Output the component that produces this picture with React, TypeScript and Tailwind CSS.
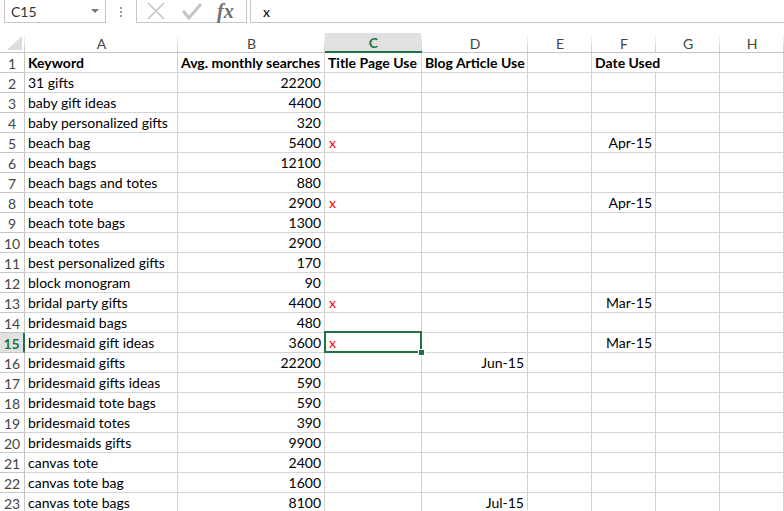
import React from "react";

type Row = { a: string; b: string; c?: string; d?: string; f?: string };

const rows: Row[] = [
  { a: "31 gifts", b: "22200" },
  { a: "baby gift ideas", b: "4400" },
  { a: "baby personalized gifts", b: "320" },
  { a: "beach bag", b: "5400", c: "x", f: "Apr-15" },
  { a: "beach bags", b: "12100" },
  { a: "beach bags and totes", b: "880" },
  { a: "beach tote", b: "2900", c: "x", f: "Apr-15" },
  { a: "beach tote bags", b: "1300" },
  { a: "beach totes", b: "2900" },
  { a: "best personalized gifts", b: "170" },
  { a: "block monogram", b: "90" },
  { a: "bridal party gifts", b: "4400", c: "x", f: "Mar-15" },
  { a: "bridesmaid bags", b: "480" },
  { a: "bridesmaid gift ideas", b: "3600", c: "x", f: "Mar-15" },
  { a: "bridesmaid gifts", b: "22200", d: "Jun-15" },
  { a: "bridesmaid gifts ideas", b: "590" },
  { a: "bridesmaid tote bags", b: "590" },
  { a: "bridesmaid totes", b: "390" },
  { a: "bridesmaids gifts", b: "9900" },
  { a: "canvas tote", b: "2400" },
  { a: "canvas tote bag", b: "1600" },
  { a: "canvas tote bags", b: "8100", d: "Jul-15" },
];

const gridCols =
  "grid grid-cols-[25px_153px_147px_97px_106px_64px_64px_64px_64px]";

const cell =
  "h-[20px] border-r border-b border-[#d4d4d4] flex items-center whitespace-nowrap text-[14px] leading-none pt-[1px]";

const hdrSep =
  "bg-[linear-gradient(to_bottom,#ffffff,#c9c9c9)] bg-no-repeat bg-[length:1px_100%] bg-right";

function ColHeader({ label, selected }: { label: string; selected?: boolean }) {
  if (selected) {
    return (
      <div
        className={`h-[20px] border-b-2 border-[#217346] bg-[#e1e1e1] flex items-center justify-center text-[14px] font-bold text-[#217346] pt-[1px] ${hdrSep}`}
      >
        {label}
      </div>
    );
  }
  return (
    <div
      className={`h-[20px] border-b border-[#c6c6c6] flex items-center justify-center text-[14px] text-[#444] pt-[1px] ${hdrSep}`}
    >
      {label}
    </div>
  );
}

export default function App() {
  return (
    <div
      className="w-[784px] h-[511px] overflow-hidden bg-white select-none text-black"
      style={{ fontFamily: "Lato, 'Open Sans', sans-serif" }}
    >
      {/* Formula bar */}
      <div className="h-[33px] flex items-start">
        <div className="mt-[-1px] ml-[4px] w-[102px] h-[24px] border border-[#c6c6c6] flex items-center justify-between pl-[6px] pr-[6px] bg-white">
          <span className="text-[14px] text-[#333] pt-[1px]">C15</span>
          <svg width="8" height="5" viewBox="0 0 8 5">
            <path d="M0 0 L8 0 L4 4 Z" fill="#777" />
          </svg>
        </div>
        <div className="w-[30px] h-[23px] flex flex-col items-center justify-center gap-[2px]">
          <div className="w-[2px] h-[2px] bg-[#9a9a9a]" />
          <div className="w-[2px] h-[2px] bg-[#9a9a9a]" />
          <div className="w-[2px] h-[2px] bg-[#9a9a9a]" />
        </div>
        <div className="mt-[-1px] w-[111px] h-[24px] border border-[#c6c6c6] flex items-center pl-[9px]">
          <svg width="20" height="20" viewBox="0 0 20 20">
            <path d="M2 2 L18 18 M18 2 L2 18" stroke="#c4c4c4" strokeWidth="1.6" fill="none" />
          </svg>
          <svg width="22" height="20" viewBox="0 0 22 20" className="ml-[15px]">
            <path d="M2 10 L8 17 L20 3" stroke="#c4c4c4" strokeWidth="3" fill="none" />
          </svg>
          <span
            className="ml-[14px] text-[20px] italic font-bold text-[#6f6f6f] leading-none"
            style={{ fontFamily: "'Liberation Serif', 'DejaVu Serif', serif" }}
          >
            fx
          </span>
        </div>
        <div className="mt-[-1px] ml-[3px] flex-1 h-[24px] border border-r-0 border-[#c6c6c6] flex items-center pl-[12px]">
          <span className="text-[14px] text-black pt-[1px]">x</span>
        </div>
      </div>

      {/* Column headers */}
      <div className={gridCols}>
        <div className={`h-[20px] border-b border-[#c6c6c6] flex items-end justify-end pr-[3px] pb-[2px] ${hdrSep}`}>
          <svg width="15" height="14" viewBox="0 0 15 14">
            <path d="M15 0 L15 14 L0 14 Z" fill="#dcdcdc" />
          </svg>
        </div>
        <ColHeader label="A" />
        <ColHeader label="B" />
        <ColHeader label="C" selected />
        <ColHeader label="D" />
        <ColHeader label="E" />
        <ColHeader label="F" />
        <ColHeader label="G" />
        <ColHeader label="H" />
      </div>

      {/* Row 1 */}
      <div className={gridCols}>
        <div className="h-[20px] border-r border-b border-[#c6c6c6] flex items-center justify-center text-[14px] text-[#444] pt-[1px]">
          1
        </div>
        <div className={`${cell} pl-[3px] font-bold`}>Keyword</div>
        <div className={`${cell} pl-[3px] font-bold`}>Avg. monthly searches</div>
        <div className={`${cell} pl-[3px] font-bold`}>Title Page Use</div>
        <div className={`${cell} pl-[3px] font-bold`}>Blog Article Use</div>
        <div className={cell} />
        <div className={`${cell} pl-[3px] font-bold border-r-0 relative z-10`}>Date Used</div>
        <div className={cell} />
        <div className={cell} />
      </div>

      {rows.map((r, i) => {
        const n = i + 2;
        const sel = n === 15;
        return (
          <div key={n} className={gridCols}>
            {sel ? (
              <div className="h-[20px] border-r-2 border-r-[#217346] border-b border-b-[#c6c6c6] bg-[#e1e1e1] flex items-center justify-center text-[14px] font-bold text-[#217346] pt-[1px]">
                {n}
              </div>
            ) : (
              <div className="h-[20px] border-r border-b border-[#c6c6c6] flex items-center justify-center text-[14px] text-[#444] pt-[1px]">
                {n}
              </div>
            )}
            <div className={`${cell} pl-[3px]`}>{r.a}</div>
            <div className={`${cell} justify-end pr-[3px]`}>{r.b}</div>
            <div className={`${cell} pl-[4px] relative`}>
              <span className="text-[#ff0000]">{r.c ?? ""}</span>
              {sel && (
                <div className="absolute -left-[1px] -top-[2px] -right-[1px] -bottom-[1px] border-2 border-[#217346] z-10">
                  <div className="absolute -right-[5px] -bottom-[5px] w-[7px] h-[7px] bg-[#217346] border border-white" />
                </div>
              )}
            </div>
            <div className={`${cell} justify-end pr-[3px]`}>{r.d ?? ""}</div>
            <div className={cell} />
            <div className={`${cell} justify-end pr-[3px]`}>{r.f ?? ""}</div>
            <div className={cell} />
            <div className={cell} />
          </div>
        );
      })}
    </div>
  );
}
